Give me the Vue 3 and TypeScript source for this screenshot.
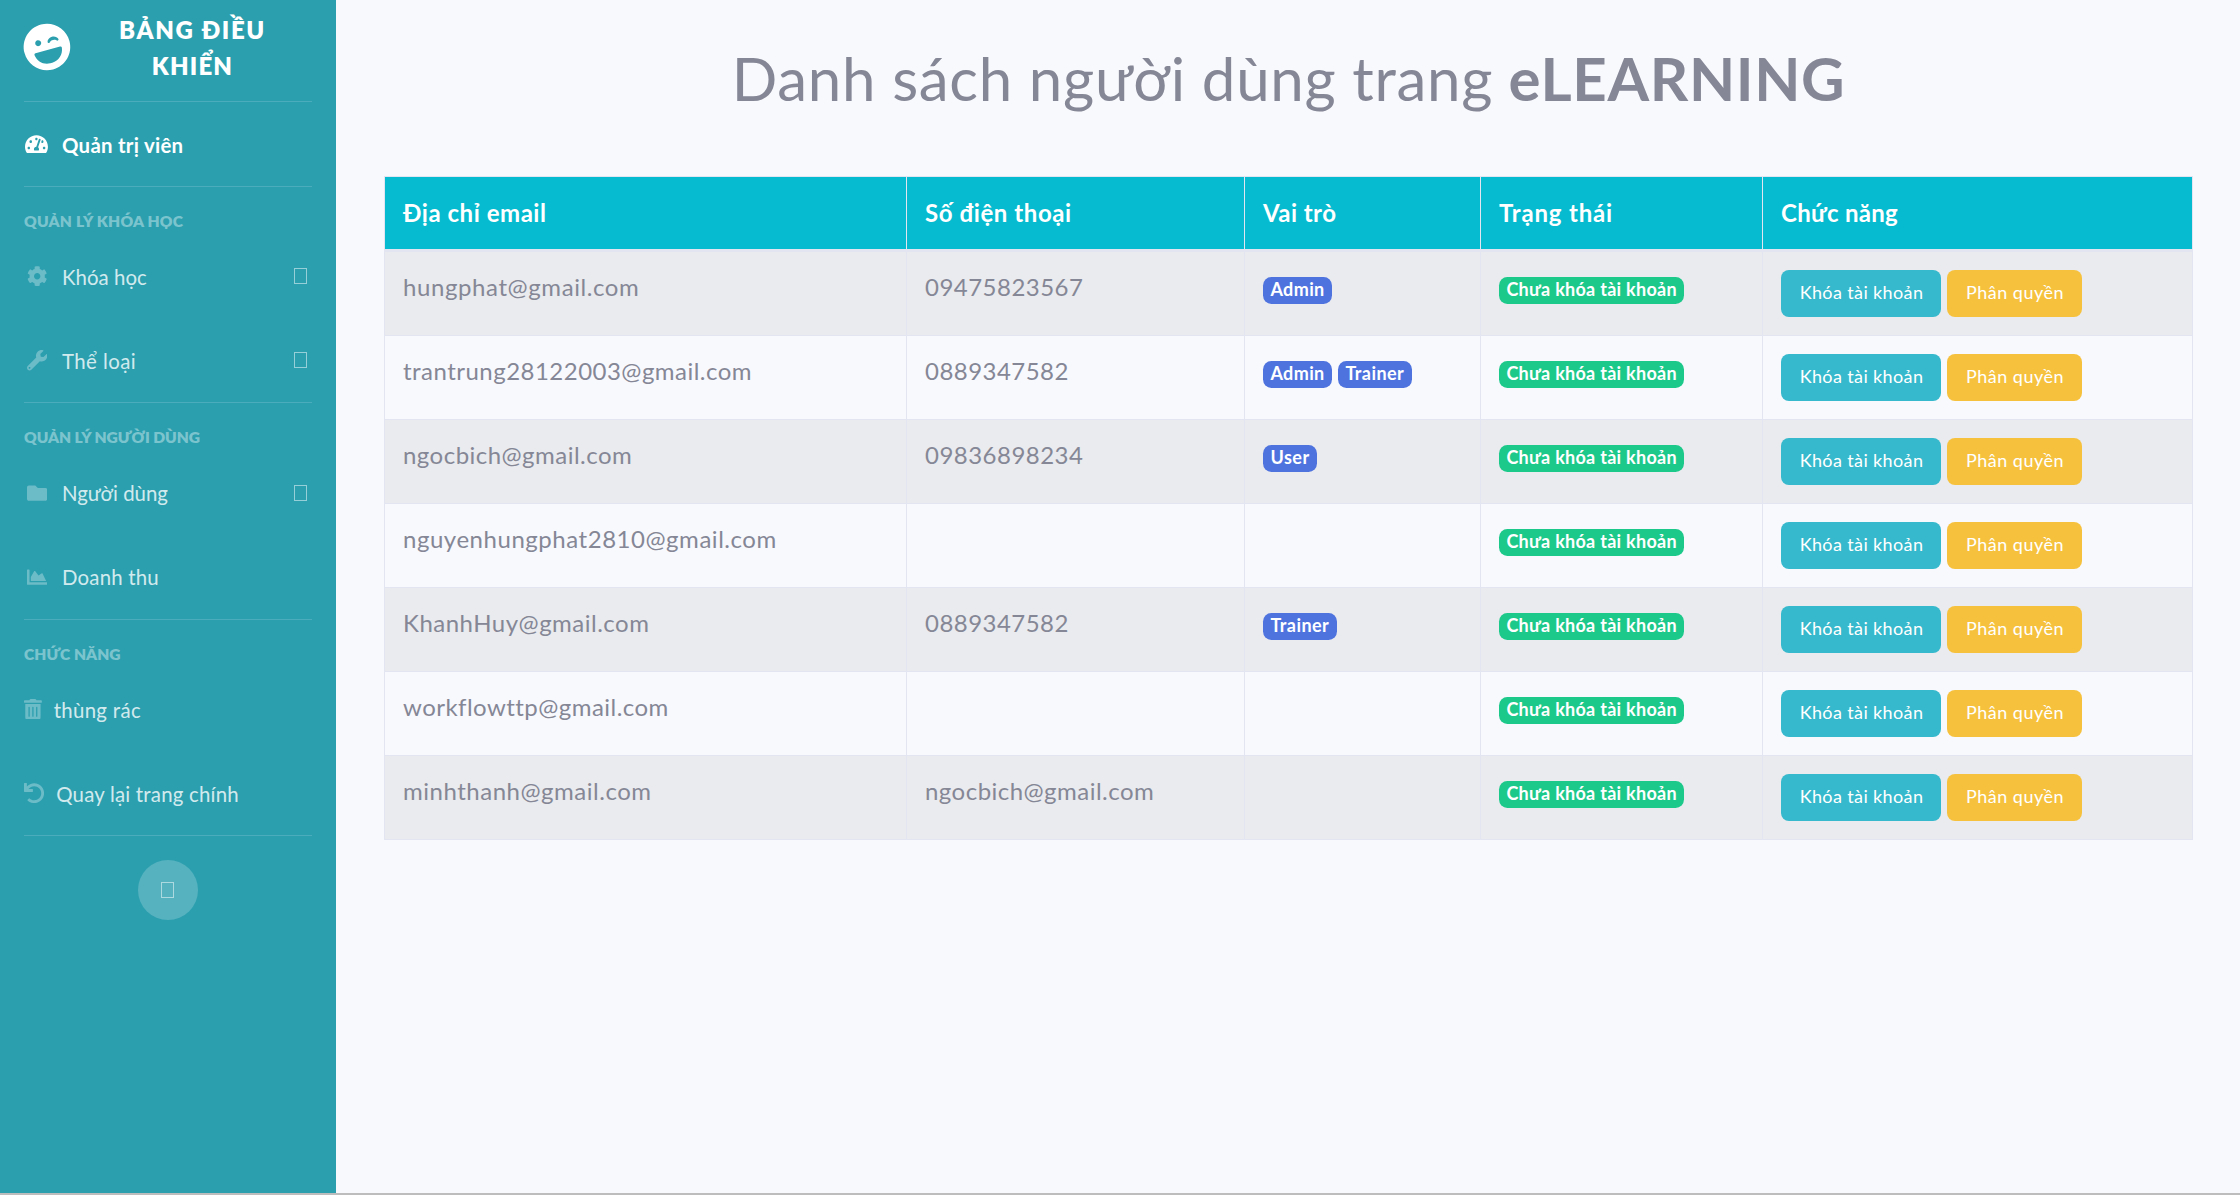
<script setup lang="ts">
interface Icon { width: number; path: string }
interface NavItem { label: string; icon: string; expandable?: boolean; fixed?: boolean }
interface NavSection { title: string; items: NavItem[] }
interface User { email: string; phone: string; roles: string[] }

const icons: Record<string, Icon> = {
  gauge: { width: 576, path: 'M288 32C128.94 32 0 160.94 0 320c0 52.8 14.25 102.26 39.06 144.8 5.61 9.62 16.3 15.2 27.44 15.2h443c11.14 0 21.83-5.58 27.44-15.2C561.75 422.26 576 372.8 576 320c0-159.06-128.94-288-288-288zm0 64c14.71 0 26.58 10.13 30.32 23.65-1.11 2.26-2.64 4.23-3.45 6.67l-9.22 27.67c-5.13 3.49-10.97 6.01-17.64 6.01-17.67 0-32-14.33-32-32S270.33 96 288 96zM96 384c-17.67 0-32-14.33-32-32s14.33-32 32-32 32 14.33 32 32-14.33 32-32 32zm48-160c-17.67 0-32-14.33-32-32s14.33-32 32-32 32 14.33 32 32-14.33 32-32 32zm246.77-72.41l-61.33 184C343.13 347.33 352 364.54 352 384c0 11.72-3.38 22.55-8.88 32H232.88c-5.5-9.45-8.88-20.28-8.88-32 0-33.94 26.5-61.43 59.9-63.59l61.34-184.01c4.17-12.56 17.73-19.45 30.36-15.17 12.57 4.19 19.35 17.79 15.17 30.36zm14.66 57.2l15.52-46.55c3.47-1.29 7.13-2.23 11.05-2.23 17.67 0 32 14.33 32 32s-14.33 32-32 32c-11.38-.01-20.89-6.28-26.57-15.22zM480 384c-17.67 0-32-14.33-32-32s14.33-32 32-32 32 14.33 32 32-14.33 32-32 32z' },
  cog: { width: 512, path: 'M487.4 315.7l-42.6-24.6c4.3-23.2 4.3-47 0-70.2l42.6-24.6c4.9-2.8 7.1-8.6 5.5-14-11.1-35.6-30-67.8-54.7-94.6-3.8-4.1-10-5.1-14.8-2.3L380.8 110c-17.9-15.4-38.5-27.3-60.8-35.1V25.8c0-5.6-3.9-10.5-9.4-11.7-36.7-8.2-74.3-7.8-109.2 0-5.5 1.2-9.4 6.1-9.4 11.7V75c-22.2 7.9-42.8 19.8-60.8 35.1L88.7 85.5c-4.9-2.8-11-1.9-14.8 2.3-24.7 26.7-43.6 58.9-54.7 94.6-1.7 5.4.6 11.2 5.5 14L67.3 221c-4.3 23.2-4.3 47 0 70.2l-42.6 24.6c-4.9 2.8-7.1 8.6-5.5 14 11.1 35.6 30 67.8 54.7 94.6 3.8 4.1 10 5.1 14.8 2.3l42.6-24.6c17.9 15.4 38.5 27.3 60.8 35.1v49.2c0 5.6 3.9 10.5 9.4 11.7 36.7 8.2 74.3 7.8 109.2 0 5.5-1.2 9.4-6.1 9.4-11.7v-49.2c22.2-7.9 42.8-19.8 60.8-35.1l42.6 24.6c4.9 2.8 11 1.9 14.8-2.3 24.7-26.7 43.6-58.9 54.7-94.6 1.5-5.5-.7-11.3-5.6-14.1zM256 336c-44.1 0-80-35.9-80-80s35.9-80 80-80 80 35.9 80 80-35.9 80-80 80z' },
  wrench: { width: 512, path: 'M507.73 109.1c-2.24-9.03-13.54-12.09-20.12-5.51l-74.36 74.36-67.88-11.31-11.31-67.88 74.36-74.36c6.62-6.62 3.43-17.9-5.66-20.16-47.38-11.74-99.55.91-136.58 37.93-39.64 39.64-50.55 97.1-34.05 147.2L18.74 402.76c-24.99 24.99-24.99 65.51 0 90.5 24.99 24.99 65.51 24.99 90.5 0l213.21-213.21c50.12 16.71 107.47 5.68 147.37-34.22 37.07-37.07 49.7-89.32 37.91-136.73zM64 472c-13.25 0-24-10.75-24-24 0-13.26 10.75-24 24-24s24 10.74 24 24c0 13.25-10.75 24-24 24z' },
  folder: { width: 512, path: 'M464 128H272l-64-64H48C21.49 64 0 85.49 0 112v288c0 26.51 21.49 48 48 48h416c26.51 0 48-21.49 48-48V176c0-26.51-21.49-48-48-48z' },
  chart: { width: 512, path: 'M500 384c6.6 0 12 5.4 12 12v40c0 6.6-5.4 12-12 12H12c-6.6 0-12-5.4-12-12V76c0-6.6 5.4-12 12-12h40c6.6 0 12 5.4 12 12v308h436zM372.7 159.5L288 216l-85.3-113.7c-5.1-6.8-15.5-6.3-19.9 1L96 248v104h384l-89.9-187.8c-3.2-6.5-11.4-8.7-17.4-4.7z' },
  trash: { width: 448, path: 'M32 464a48 48 0 0 0 48 48h288a48 48 0 0 0 48-48V128H32zm272-256a16 16 0 0 1 32 0v224a16 16 0 0 1-32 0zm-96 0a16 16 0 0 1 32 0v224a16 16 0 0 1-32 0zm-96 0a16 16 0 0 1 32 0v224a16 16 0 0 1-32 0zM432 32H312l-9.4-18.7A24 24 0 0 0 281.1 0H166.8a23.72 23.72 0 0 0-21.4 13.3L136 32H16A16 16 0 0 0 0 48v32a16 16 0 0 0 16 16h416a16 16 0 0 0 16-16V48a16 16 0 0 0-16-16z' },
  undo: { width: 512, path: 'M212.333 224.333H12c-6.627 0-12-5.373-12-12V12C0 5.373 5.373 0 12 0h48c6.627 0 12 5.373 12 12v78.112C117.773 39.279 184.26 7.47 258.175 8.007c136.906.994 246.448 111.623 246.157 248.532C504.041 393.258 393.12 504 256.333 504c-64.089 0-122.496-24.313-166.51-64.215-5.099-4.622-5.334-12.554-.467-17.42l33.967-33.967c4.474-4.474 11.662-4.717 16.401-.525C170.76 415.336 211.58 432 256.333 432c97.268 0 176-78.716 176-176 0-97.267-78.716-176-176-176-58.496 0-110.28 28.476-142.274 72.333h98.274c6.627 0 12 5.373 12 12v48c0 6.627-5.373 12-12 12z' },
}

const sections: NavSection[] = [
  {
    title: 'QUẢN LÝ KHÓA HỌC',
    items: [
      { label: 'Khóa học', icon: 'cog', expandable: true, fixed: true },
      { label: 'Thể loại', icon: 'wrench', expandable: true, fixed: true },
    ],
  },
  {
    title: 'QUẢN LÝ NGƯỜI DÙNG',
    items: [
      { label: 'Người dùng', icon: 'folder', expandable: true, fixed: true },
      { label: 'Doanh thu', icon: 'chart', fixed: true },
    ],
  },
  {
    title: 'CHỨC NĂNG',
    items: [
      { label: 'thùng rác', icon: 'trash' },
      { label: 'Quay lại trang chính', icon: 'undo' },
    ],
  },
]

const columns = ['Địa chỉ email', 'Số điện thoại', 'Vai trò', 'Trạng thái', 'Chức năng']

const users: User[] = [
  { email: 'hungphat@gmail.com', phone: '09475823567', roles: ['Admin'] },
  { email: 'trantrung28122003@gmail.com', phone: '0889347582', roles: ['Admin', 'Trainer'] },
  { email: 'ngocbich@gmail.com', phone: '09836898234', roles: ['User'] },
  { email: 'nguyenhungphat2810@gmail.com', phone: '', roles: [] },
  { email: 'KhanhHuy@gmail.com', phone: '0889347582', roles: ['Trainer'] },
  { email: 'workflowttp@gmail.com', phone: '', roles: [] },
  { email: 'minhthanh@gmail.com', phone: 'ngocbich@gmail.com', roles: [] },
]

const tracking: Record<string, number> = {
  'BẢNG ĐIỀU': 0.0688, 'KHIỂN': 0.0498, 'Quản trị viên': 0.0134,
  'QUẢN LÝ KHÓA HỌC': 0.0145, 'QUẢN LÝ NGƯỜI DÙNG': -0.0035, 'CHỨC NĂNG': 0.002,
  'Khóa học': 0.0018, 'Thể loại': 0.0207, 'Người dùng': -0.0006, 'Doanh thu': 0.0097,
  'thùng rác': 0.016, 'Quay lại trang chính': 0.0105,
  'Địa chỉ email': 0.0222, 'Số điện thoại': 0.0244, 'Vai trò': 0.0186, 'Trạng thái': 0.034, 'Chức năng': 0.0126,
  'hungphat@gmail.com': 0.0246, 'trantrung28122003@gmail.com': 0.0198, 'ngocbich@gmail.com': 0.0196,
  'nguyenhungphat2810@gmail.com': 0.0222, 'KhanhHuy@gmail.com': 0.0205, 'workflowttp@gmail.com': 0.019,
  'minhthanh@gmail.com': 0.0216, '09475823567': 0.02, '09836898234': 0.02, '0889347582': 0.0191,
  'Admin': 0.0215, 'Trainer': 0.0236, 'User': 0.03, 'Chưa khóa tài khoản': 0.0155,
  'Khóa tài khoản': 0.0207, 'Phân quyền': 0.0276,
}
const track = (text: string) => ({ letterSpacing: `${tracking[text] ?? 0.02}em` })
</script>

<template>
  <div class="page">
    <div class="shell">
      <aside class="sidebar">
        <div class="brand">
          <svg class="brand-icon" viewBox="0 0 496 512">
            <path d="M248 8C111 8 0 119 0 256s111 248 248 248 248-111 248-248S385 8 248 8zm20.1 198c4-25.2 34.2-42.1 59.9-42.1s55.9 16.9 59.9 42.1c1.7 11.1-11.4 18.3-19.8 10.8l-9.5-8.5c-14.8-13.2-46.2-13.2-61 0L288 217c-8.4 7.4-21.6.3-19.9-11zM168 160c17.7 0 32 14.3 32 32s-14.3 32-32 32-32-14.3-32-32 14.3-32 32-32zm230.9 146C390 378.5 330.2 432 259.4 432h-22.8c-70.8 0-130.6-53.5-139.5-126-1.2-9.5 6.3-18 15.9-18h270c9.6 0 17.1 8.5 15.9 18z" />
          </svg>
          <div class="brand-text">
            <span :style="track('BẢNG ĐIỀU')">BẢNG ĐIỀU</span>
            <span :style="track('KHIỂN')">KHIỂN</span>
          </div>
        </div>
        <hr>
        <a class="nav-link active">
          <span class="icon-box fixed">
            <svg :viewBox="`0 0 ${icons.gauge.width} 512`"><path :d="icons.gauge.path" /></svg>
          </span>
          <span class="label" :style="track('Quản trị viên')">Quản trị viên</span>
        </a>
        <hr>
        <template v-for="section in sections" :key="section.title">
          <div class="section-title" :style="track(section.title)">{{ section.title }}</div>
          <a v-for="item in section.items" :key="item.label" class="nav-link">
            <span class="icon-box" :class="{ fixed: item.fixed }">
              <svg :viewBox="`0 0 ${icons[item.icon].width} 512`"><path :d="icons[item.icon].path" /></svg>
            </span>
            <span class="label" :style="track(item.label)">{{ item.label }}</span>
            <i v-if="item.expandable" class="glyph-box" />
          </a>
          <hr>
        </template>
        <button class="toggle"><i class="glyph-box" /></button>
      </aside>

      <main class="content">
        <h1><span class="light">Danh sách người dùng trang</span> <b>eLEARNING</b></h1>
        <table>
          <colgroup>
            <col class="c-email"><col class="c-phone"><col class="c-role"><col class="c-status"><col class="c-action">
          </colgroup>
          <thead>
            <tr><th v-for="c in columns" :key="c" :style="track(c)">{{ c }}</th></tr>
          </thead>
          <tbody>
            <tr v-for="u in users" :key="u.email">
              <td :style="track(u.email)">{{ u.email }}</td>
              <td :style="track(u.phone)">{{ u.phone }}</td>
              <td>
                <div class="badges">
                  <span v-for="r in u.roles" :key="r" class="badge role" :style="track(r)">{{ r }}</span>
                </div>
              </td>
              <td>
                <div class="badges">
                  <span class="badge status" :style="track('Chưa khóa tài khoản')">Chưa khóa tài khoản</span>
                </div>
              </td>
              <td>
                <div class="actions">
                  <button class="btn info" :style="track('Khóa tài khoản')">Khóa tài khoản</button>
                  <button class="btn warning" :style="track('Phân quyền')">Phân quyền</button>
                </div>
              </td>
            </tr>
          </tbody>
        </table>
      </main>
    </div>
    <div class="bottom-edge" />
  </div>
</template>

<style>
body { background: #f8f9fc; }
</style>

<style scoped>
.page {
  display: flex;
  flex-direction: column;
  width: 2240px;
  height: 1195px;
  overflow: hidden;
  box-sizing: border-box;
  background: #f8f9fd;
  color: #858796;
  font-family: Lato, "Liberation Sans", sans-serif;
  font-size: 24px;
  line-height: 36px;
}
.page * { box-sizing: border-box; }
.shell { display: flex; flex: 1; min-height: 0; }
.bottom-edge { height: 2px; background: #bdbdbd; }

.sidebar { width: 336px; flex: none; background: #2c9faf; color: #fff; }
.sidebar hr { height: 1px; margin: 0 24px; border: 0; background: rgba(255, 255, 255, .15); }

.brand { display: flex; height: 101px; padding: 12px 24px 0 23px; }
.brand-icon { width: 48px; height: 48px; margin-top: 11px; flex: none; fill: #fff; transform: rotate(-15deg); }
.brand-text {
  display: flex;
  flex: 1;
  flex-direction: column;
  align-items: center;
  margin: 0 23px 0 25px;
  font-weight: 800;
  white-space: nowrap;
}

.nav-link {
  display: flex;
  align-items: center;
  height: 84px;
  padding: 0 29px 0 24px;
  font-size: 20.4px;
  line-height: 30px;
  color: rgba(255, 255, 255, .8);
  white-space: nowrap;
}
.nav-link.active { color: #fff; font-weight: 700; }
.label { padding-top: 1px; }
.icon-box { display: flex; justify-content: center; margin-right: 11.8px; }
.icon-box.fixed { width: 25.5px; margin-right: 12.5px; }
.icon-box svg { display: block; height: 20.4px; fill: rgba(255, 255, 255, .3); }
.nav-link.active svg { fill: #fff; }
.glyph-box { width: 13px; height: 16px; border: 1px solid rgba(255, 255, 255, .5); }
.nav-link .glyph-box { margin-left: auto; }

.section-title {
  height: 47.4px;
  padding: 22px 24px 0;
  font-size: 15.6px;
  font-weight: 800;
  line-height: 24px;
  color: rgba(255, 255, 255, .4);
  white-space: nowrap;
}

.toggle {
  display: flex;
  align-items: center;
  justify-content: center;
  width: 60px;
  height: 60px;
  margin: 24px auto 0;
  padding: 0 2px 0 0;
  border: 0;
  border-radius: 50%;
  background: rgba(255, 255, 255, .2);
}

.content { flex: 1; padding: 42px 47px 0 48px; }
h1 {
  height: 72px;
  margin: 0 0 62px;
  font-size: 60px;
  font-weight: 400;
  line-height: 72px;
  text-align: center;
  white-space: nowrap;
}
h1 .light { letter-spacing: .0114em; }
h1 b { font-weight: 700; letter-spacing: .0105em; }

table {
  width: 1809px;
  table-layout: fixed;
  border-collapse: separate;
  border-spacing: 0;
  border-top: 1px solid #e3e6f0;
  border-right: 1px solid #e3e6f0;
}
.c-email { width: 522px; }
.c-phone { width: 338px; }
.c-role { width: 236px; }
.c-status { width: 282px; }
.c-action { width: 430px; }
th {
  height: 75px;
  padding: 18px 18px 0;
  border-left: 1px solid #e3e6f0;
  border-bottom: 3px solid #e3e6f0;
  background: #06bbcf;
  color: #fff;
  font-weight: 700;
  text-align: left;
  vertical-align: top;
  white-space: nowrap;
}
td {
  height: 84px;
  padding: 17px 18px 0;
  border-left: 1px solid #e3e6f0;
  border-bottom: 1px solid #e3e6f0;
  vertical-align: top;
  white-space: nowrap;
}
tbody tr:nth-child(odd) td { background: #eaebee; }

.badges { display: flex; gap: 6px; padding-top: 8px; }
.badge {
  height: 27px;
  padding: 0 7.4px;
  border-radius: 8.4px;
  color: #fff;
  font-size: 18px;
  font-weight: 700;
  line-height: 25px;
}
.role { background: #4e73df; }
.status { background: #1cc88a; }

.actions { display: flex; gap: 6px; padding-top: 1px; }
.btn {
  height: 47px;
  padding: 0 0 2px 1px;
  border: 0;
  border-radius: 8px;
  color: #fff;
  font: 400 18px/45px Lato, "Liberation Sans", sans-serif;
}
.info { width: 160px; background: #36b9cc; }
.warning { width: 135px; background: #f6c23e; }
</style>
